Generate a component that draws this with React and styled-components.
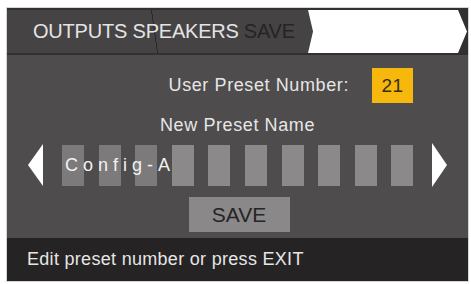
import React from "react";
import styled, { createGlobalStyle } from "styled-components";

const Global = createGlobalStyle`
  html, body { margin: 0; padding: 0; background: #ffffff; }
  body { font-family: "Liberation Sans", Arial, sans-serif; }
`;

const Page = styled.div`
  width: 471px;
  height: 284px;
  padding: 8px 3px 3px 7px;
  box-sizing: border-box;
`;

const Screen = styled.div`
  width: 461px;
  height: 273px;
  display: flex;
  flex-direction: column;
  background: #4e4c4d;
  box-shadow: 0 0 0 1px #d4d4d4;
`;

const Header = styled.div`
  height: 47px;
  flex: none;
  display: flex;
  align-items: stretch;
  background: #323031;
  padding: 2px 0 2px 0;
  box-sizing: border-box;
`;

const Crumb = styled.div`
  position: relative;
  width: 306px;
  flex: none;
  background: #454344;
  clip-path: polygon(0 0, calc(100% - 5px) 0, 100% 50%, calc(100% - 5px) 100%, 0 100%);
  display: flex;
  align-items: center;
  padding-left: 26px;
  box-sizing: border-box;
  font-size: 20px;
  letter-spacing: -0.2px;
  white-space: nowrap;
  &::after {
    content: "";
    position: absolute;
    left: 146px;
    top: 0;
    width: 4px;
    height: 100%;
    background: linear-gradient(to right, transparent 1px, #2a2829 1px, #2a2829 2px, transparent 2px);
    transform: skewX(8deg);
  }
`;

const CrumbText = styled.span`
  position: relative;
  z-index: 1;
  color: ${(p) => (p.$active ? "#262425" : "#e4e4e4")};
  margin-right: ${(p) => (p.$gap ? "5px" : "0")};
`;

const WhiteTab = styled.div`
  flex: none;
  width: 159px;
  margin-left: -5px;
  background: #ffffff;
  clip-path: polygon(0 0, calc(100% - 9px) 0, 100% 50%, calc(100% - 9px) 100%, 0 100%, 5px 50%);
`;

const Body = styled.div`
  flex: 1;
  display: flex;
  flex-direction: column;
  align-items: stretch;
  padding-top: 13px;
`;

const PresetRow = styled.div`
  display: flex;
  justify-content: flex-end;
  align-items: center;
  gap: 23px;
  padding-right: 55px;
`;

const Label = styled.span`
  color: #e6e6e6;
  font-size: 18px;
  letter-spacing: 0.6px;
`;

const NumberBox = styled.div`
  width: 41px;
  height: 35px;
  background: #f6b80c;
  color: #3a2c10;
  font-size: 19px;
  display: flex;
  align-items: center;
  justify-content: center;
  letter-spacing: 0.5px;
`;

const Title = styled.div`
  color: #e6e6e6;
  font-size: 18px;
  letter-spacing: 0.6px;
  text-align: center;
  margin-top: 12px;
  line-height: 21px;
`;

const NameRow = styled.div`
  display: flex;
  align-items: center;
  margin-top: 7px;
  height: 44px;
  padding-left: 21px;
`;

const Arrow = styled.svg`
  flex: none;
  display: block;
`;

const Slots = styled.div`
  position: relative;
  display: flex;
  gap: 14.6px;
  margin-left: ${(p) => p.$ml}px;
  margin-right: 18px;
`;

const Slot = styled.div`
  width: 22px;
  height: 41px;
  background: ${(p) => (p.$filled ? "#7c7a7b" : "#8b898a")};
`;

const NameText = styled.span`
  position: absolute;
  left: 3px;
  top: 10px;
  color: #f2f2f2;
  font-size: 18px;
  letter-spacing: 5px;
  white-space: nowrap;
`;

const SaveButton = styled.div`
  align-self: center;
  margin-top: 10px;
  width: 101px;
  height: 35px;
  background: #8a8889;
  color: #262425;
  font-size: 21px;
  display: flex;
  align-items: center;
  justify-content: center;
  margin-left: 3px;
`;

const Footer = styled.div`
  height: 43px;
  flex: none;
  background: #252324;
  display: flex;
  align-items: center;
  padding-left: 20px;
  color: #e6e6e6;
  font-size: 18px;
  letter-spacing: 0.3px;
`;

export default function App() {
  const slots = Array.from({ length: 10 }, (_, i) => i);
  return (
    <>
      <Global />
      <Page>
        <Screen>
          <Header>
            <Crumb>
              <CrumbText $gap>OUTPUTS SPEAKERS</CrumbText>
              <CrumbText $active>SAVE</CrumbText>
            </Crumb>
            <WhiteTab />
          </Header>
          <Body>
            <PresetRow>
              <Label>User Preset Number:</Label>
              <NumberBox>21</NumberBox>
            </PresetRow>
            <Title>New Preset Name</Title>
            <NameRow>
              <Arrow width="16" height="42" viewBox="0 0 16 42">
                <polygon points="0,21 15,0 15,42" fill="#ffffff" />
              </Arrow>
              <Slots $ml={18}>
                {slots.map((i) => (
                  <Slot key={i} $filled={i < 3} />
                ))}
                <NameText>Config-A</NameText>
              </Slots>
              <Arrow width="16" height="44" viewBox="0 0 16 44">
                <polygon points="1,0 16,22 1,44" fill="#ffffff" />
              </Arrow>
            </NameRow>
            <SaveButton>SAVE</SaveButton>
          </Body>
          <Footer>Edit preset number or press EXIT</Footer>
        </Screen>
      </Page>
    </>
  );
}
